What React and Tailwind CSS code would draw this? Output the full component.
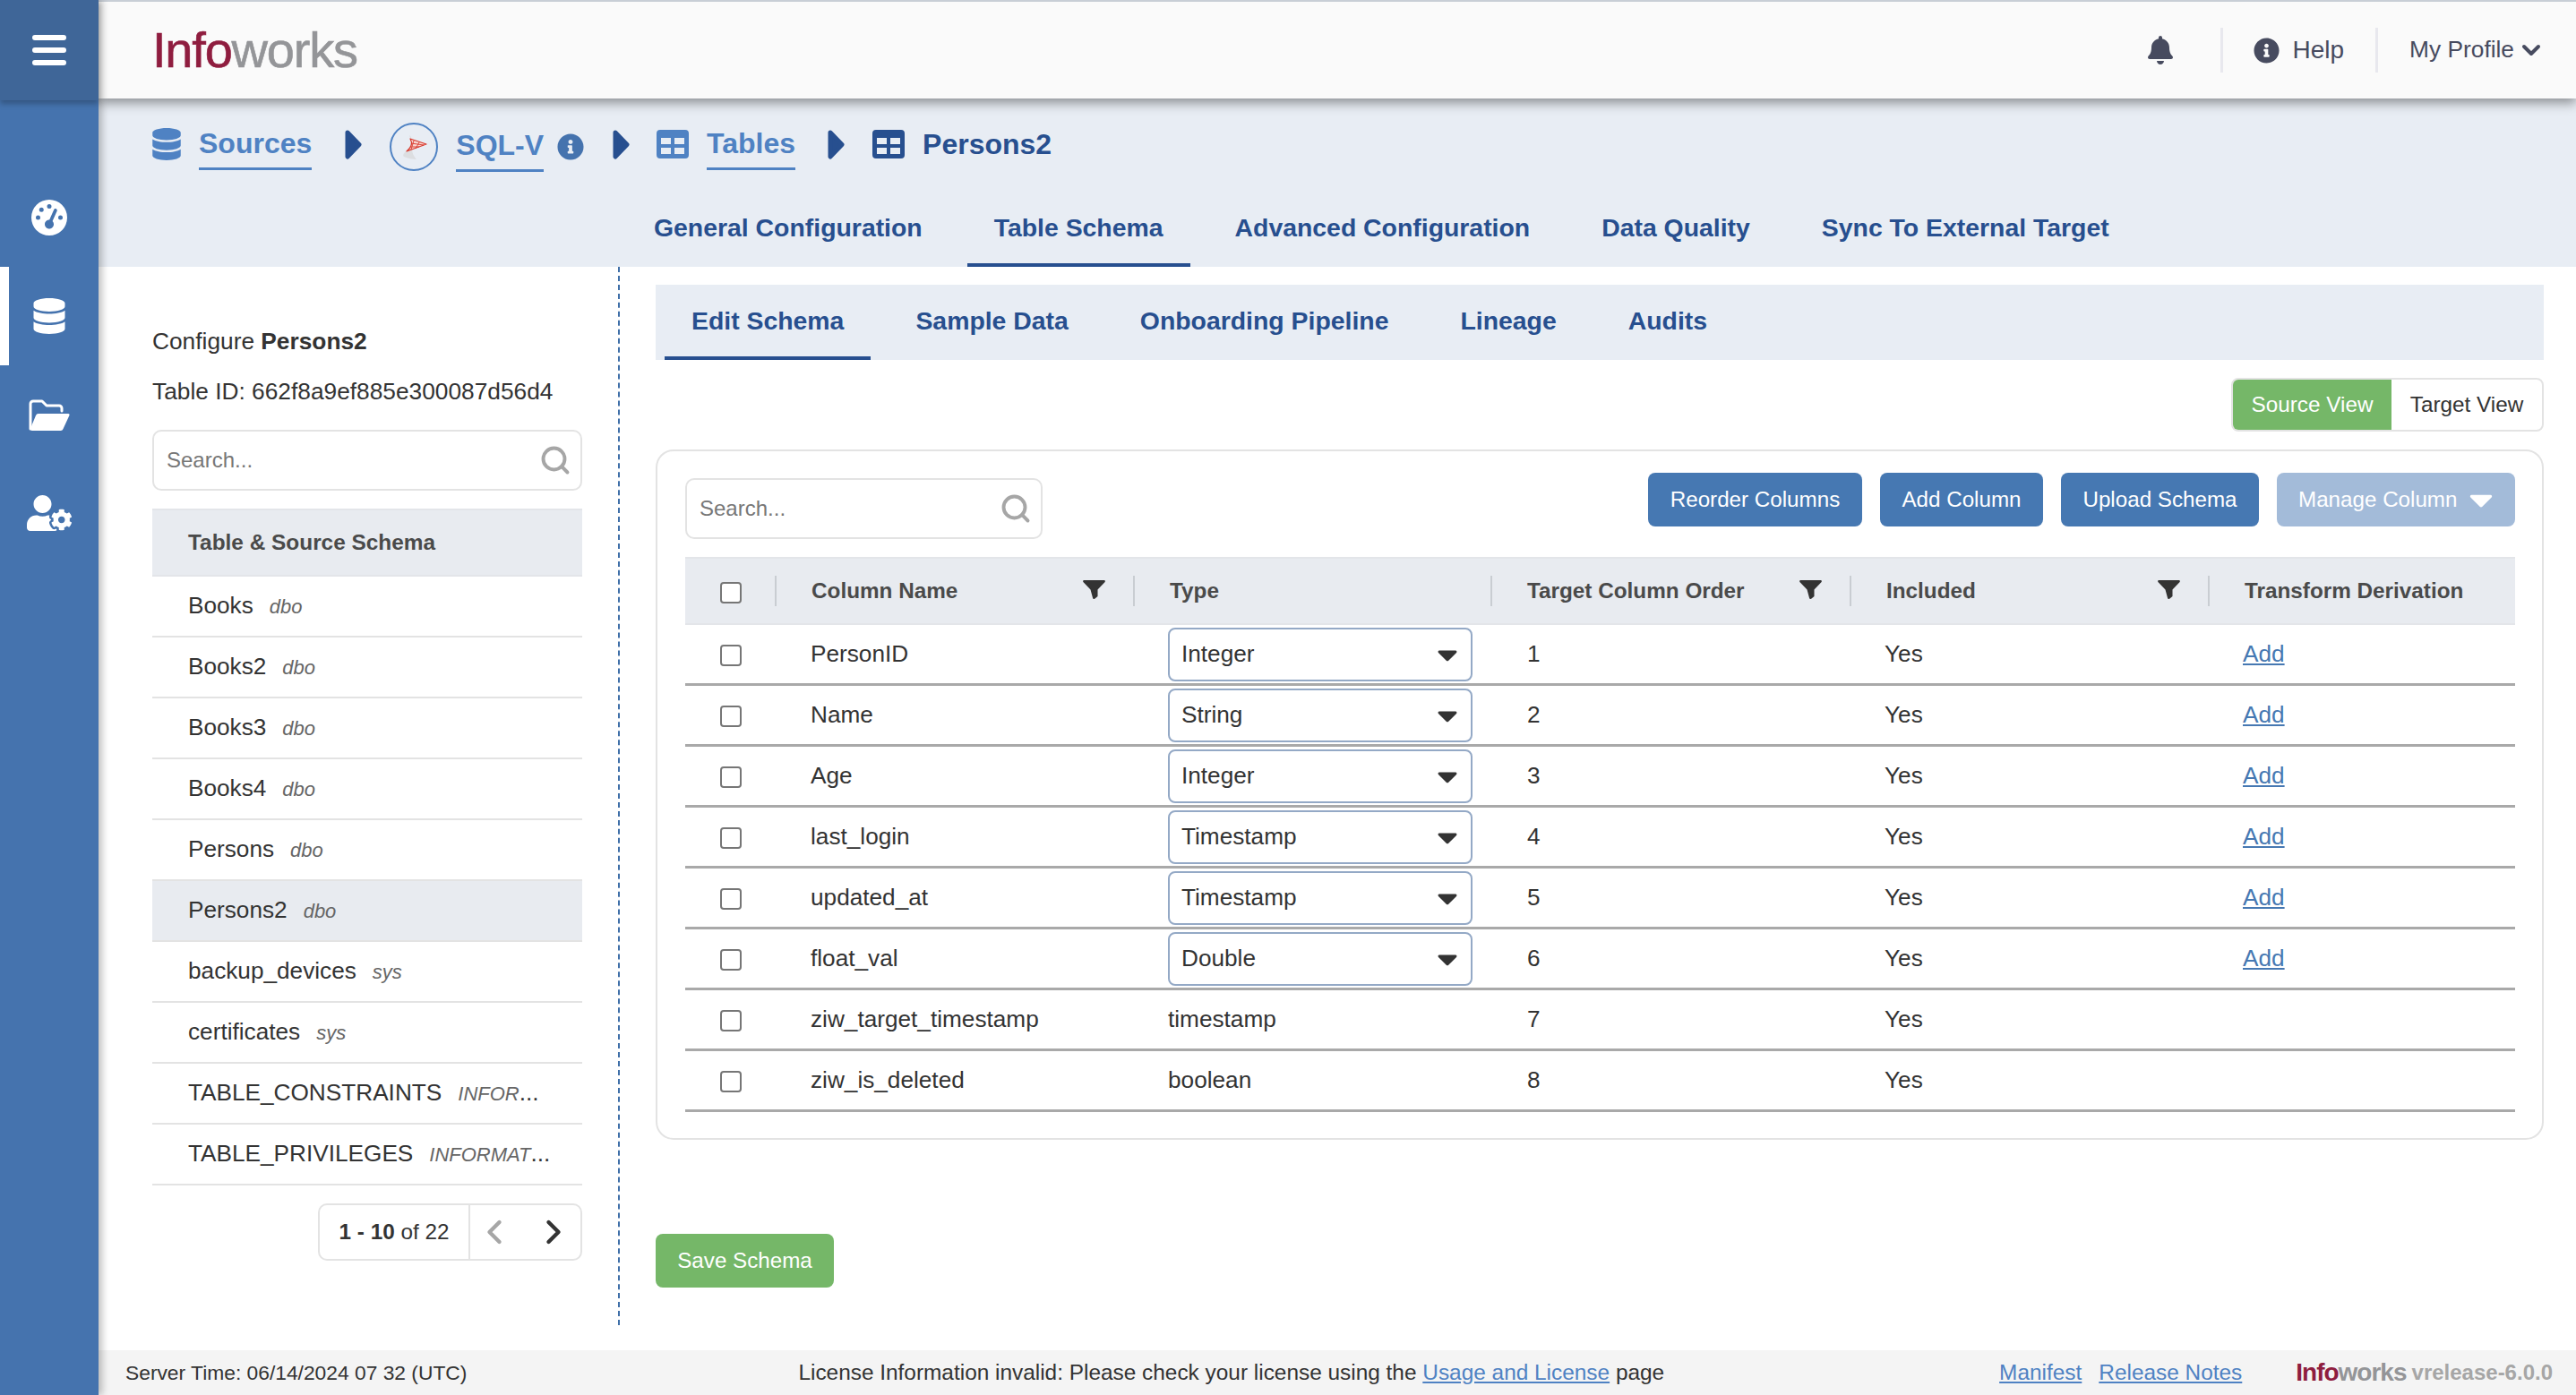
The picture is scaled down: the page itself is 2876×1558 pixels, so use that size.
import { ChevronDown, ChevronLeft, ChevronRight, Search } from 'lucide-react';
import { FaBell, FaCaretDown, FaDatabase, FaInfoCircle, FaUserCog } from 'react-icons/fa';
import { FaGaugeHigh } from 'react-icons/fa6';

const topTabs = ['General Configuration', 'Table Schema', 'Advanced Configuration', 'Data Quality', 'Sync To External Target'];
const subTabs = ['Edit Schema', 'Sample Data', 'Onboarding Pipeline', 'Lineage', 'Audits'];

const tables = [
  { name: 'Books', schema: 'dbo' },
  { name: 'Books2', schema: 'dbo' },
  { name: 'Books3', schema: 'dbo' },
  { name: 'Books4', schema: 'dbo' },
  { name: 'Persons', schema: 'dbo' },
  { name: 'Persons2', schema: 'dbo', active: true },
  { name: 'backup_devices', schema: 'sys' },
  { name: 'certificates', schema: 'sys' },
  { name: 'TABLE_CONSTRAINTS', schema: 'INFOR', cut: true },
  { name: 'TABLE_PRIVILEGES', schema: 'INFORMAT', cut: true },
];

const columns = [
  { name: 'PersonID', type: 'Integer', editable: true },
  { name: 'Name', type: 'String', editable: true },
  { name: 'Age', type: 'Integer', editable: true },
  { name: 'last_login', type: 'Timestamp', editable: true },
  { name: 'updated_at', type: 'Timestamp', editable: true },
  { name: 'float_val', type: 'Double', editable: true },
  { name: 'ziw_target_timestamp', type: 'timestamp' },
  { name: 'ziw_is_deleted', type: 'boolean' },
];

const gridCols = 'grid grid-cols-[100px_400px_399px_401px_400px_343px]';

const Arrow = () => (
  <svg viewBox="0 0 19 33" className="w-[19px] h-[33px] mb-[5px] text-[#274f8f]">
    <path d="M3 3 L16 16.5 L3 30 Z" fill="currentColor" stroke="currentColor" strokeWidth="5" strokeLinejoin="round" />
  </svg>
);

const TableIcon = ({ className }) => (
  <svg viewBox="0 0 36 32" className={className}>
    <path
      fill="currentColor"
      fillRule="evenodd"
      d="M4 0h28a4 4 0 0 1 4 4v24a4 4 0 0 1-4 4H4a4 4 0 0 1-4-4V4a4 4 0 0 1 4-4z M5 9v7h11V9z M20 9v7h11V9z M5 20v7h11v-7z M20 20v7h11v-7z"
    />
  </svg>
);

const FolderIcon = () => (
  <svg viewBox="0 0 46 35" className="w-[46px] h-[35px] text-white">
    <path d="M2 33 V5 a3 3 0 0 1 3-3 H15 l5 5 H34 a3 3 0 0 1 3 3 V13" fill="none" stroke="currentColor" strokeWidth="3" strokeLinejoin="round" strokeLinecap="round" />
    <path d="M11 16 H44 a1.5 1.5 0 0 1 1.4 2 L38.5 33 a3 3 0 0 1-2.7 2 H4 a2 2 0 0 1-2-2.6 L8 18 a3 3 0 0 1 3-2 Z" fill="currentColor" />
  </svg>
);

const FilterIcon = () => (
  <svg viewBox="0 0 25 21" className="w-[25px] h-[21px] text-[#333] mb-[3px]">
    <path
      fill="currentColor"
      d="M1.5 0 H23.5 C24.8 0 25.3 1.2 24.4 2.2 L16.5 10.5 V18 L13.5 20.6 C12.5 21.4 11 21 11 19.8 L8.5 10.5 L0.6 2.2 C-0.3 1.2 0.2 0 1.5 0 Z"
    />
  </svg>
);

const SqlLogo = () => (
  <div className="w-[54px] h-[54px] rounded-full border-2 border-[#4f82c3] flex items-center justify-center shrink-0">
    <svg viewBox="0 0 50 50" className="w-[50px] h-[50px]">
      <path d="M20 12 C24 14 23 22 18 28 C14 32 12 34 14 36 C18 38 24 39 28 39 C24 34 22 30 24 24 Z" fill="#dcdee1" />
      <path d="M21 16 L39 22 L17 30 C22 26 24 21 21 16 Z" fill="#f7d5d0" stroke="#d93a2e" strokeWidth="1.2" strokeLinejoin="round" />
      <path d="M25 18 L22 28 M31 20 L27 27 M22 21 L36 23 M21 25 L31 25" stroke="#d93a2e" strokeWidth="0.9" fill="none" />
    </svg>
  </div>
);

const SearchBox = ({ className }) => (
  <div className={`flex items-center justify-between h-[68px] border-2 border-[#e3e3e3] rounded-[10px] pl-[14px] pr-[10px] bg-white ${className}`}>
    <span className="text-[24px] text-[#777]">Search...</span>
    <Search className="w-[36px] h-[36px] text-[#a6a6a6]" strokeWidth={2.6} />
  </div>
);

const HeaderCell = ({ label, filter }) => (
  <div className="flex items-center justify-between self-center h-[34px] border-l-2 border-[#c9cdd2] pl-[39px] pr-[31px]">
    <span className="text-[24.3px] font-bold text-[#4a4a4a]">{label}</span>
    {filter && <FilterIcon />}
  </div>
);

const Checkbox = () => (
  <div className="pl-[39px] pt-[3px] flex items-center">
    <input type="checkbox" className="appearance-none w-[24px] h-[24px] border-2 border-[#767676] rounded-[4px] bg-white" />
  </div>
);

const App = () => {
  return (
    <div className="flex w-[2876px] h-[1558px] overflow-hidden bg-white font-['Liberation_Sans',sans-serif] text-[#333]">
      {/* Sidebar */}
      <aside className="relative z-20 flex flex-col w-[110px] shrink-0 bg-[#4573ae] shadow-[4px_0_8px_rgba(0,0,0,0.25)]">
        <div className="flex flex-col items-center justify-center gap-[8px] h-[112px] bg-[#3f6698] shadow-[0_4px_6px_rgba(0,0,0,0.25)]">
          <div className="w-[38px] h-[6px] rounded-full bg-white" />
          <div className="w-[38px] h-[6px] rounded-full bg-white" />
          <div className="w-[38px] h-[6px] rounded-full bg-white" />
        </div>
        <div className="flex items-center justify-center h-[110px] mt-[76px] text-white">
          <FaGaugeHigh className="w-[40px] h-[40px]" />
        </div>
        <div className="flex items-center justify-center h-[110px] border-l-[10px] border-white text-white pr-[10px]">
          <FaDatabase className="w-[36px] h-[40px]" />
        </div>
        <div className="flex items-center justify-center h-[110px]">
          <FolderIcon />
        </div>
        <div className="flex items-center justify-center h-[110px] text-white">
          <FaUserCog className="w-[50px] h-[40px]" />
        </div>
      </aside>

      <div className="flex flex-col flex-1 min-w-0">
        {/* Top bar */}
        <header className="relative z-10 flex items-center h-[110px] shrink-0 bg-[#fafafa] border-t-2 border-[#c8ced6] shadow-[0_5px_12px_rgba(0,0,0,0.4)] pl-[60px]">
          <div className="text-[56px] tracking-[-1.2px] leading-none [-webkit-text-stroke:0.6px]">
            <span className="text-[#8f1d3f]">Info</span>
            <span className="text-[#949598]">works</span>
          </div>
          <div className="flex items-center ml-auto text-[#474b5f]">
            <FaBell className="w-[28px] h-[32px]" />
            <div className="w-[3px] h-[50px] bg-[#e8e8ee] ml-[53px]" />
            <FaInfoCircle className="w-[29px] h-[29px] ml-[34px]" />
            <span className="text-[28px] ml-[15px]">Help</span>
            <div className="w-[3px] h-[50px] bg-[#e8e8ee] ml-[35px]" />
            <span className="text-[26.3px] ml-[35px]">My Profile</span>
            <ChevronDown className="w-[32px] h-[32px] ml-[3px] mr-[34px]" strokeWidth={3} />
          </div>
        </header>

        {/* Breadcrumb and top tabs */}
        <section className="h-[188px] shrink-0 bg-[#e8edf4]">
          <div className="flex items-center h-[54px] mt-[27px] pl-[60px] text-[32px] font-bold">
            <FaDatabase className="w-[32px] h-[36px] mb-[6px] text-[#4f82c3]" />
            <a className="ml-[20px] h-[52px] border-b-[3px] border-[#4f82c3] text-[#4f82c3] leading-[44px]">Sources</a>
            <div className="ml-[37px]"><Arrow /></div>
            <div className="ml-[31px]"><SqlLogo /></div>
            <a className="ml-[20px] h-[52px] mt-[4px] border-b-[3px] border-[#4f82c3] text-[#4f82c3] leading-[44px]">SQL-V</a>
            <FaInfoCircle className="w-[30px] h-[30px] ml-[15px] text-[#4573ae]" />
            <div className="ml-[32px]"><Arrow /></div>
            <TableIcon className="w-[36px] h-[32px] ml-[30px] mb-[7px] text-[#4f82c3]" />
            <a className="ml-[20px] h-[52px] border-b-[3px] border-[#4f82c3] text-[#4f82c3] leading-[44px]">Tables</a>
            <div className="ml-[36px]"><Arrow /></div>
            <TableIcon className="w-[36px] h-[32px] ml-[31px] mb-[7px] text-[#274f8f]" />
            <span className="ml-[20px] mb-[6px] text-[#274f8f]">Persons2</span>
          </div>
          <nav className="flex gap-[20px] mt-[35px] pl-[590px]">
            {topTabs.map((tab) => (
              <div
                key={tab}
                className={`h-[72px] px-[30px] pb-[12px] flex items-center text-[28.4px] font-bold text-[#274f8f] border-b-[4px] ${
                  tab === 'Table Schema' ? 'border-[#274f8f]' : 'border-transparent'
                }`}
              >
                {tab}
              </div>
            ))}
          </nav>
        </section>

        {/* Content */}
        <div className="flex flex-1 min-h-0">
          {/* Table list */}
          <div className="w-[582px] h-[1182px] shrink-0 border-r-2 border-dashed border-[#3f6fa8] pl-[60px] pr-[40px]">
            <p className="text-[26.3px] mt-[68px] leading-[30px]">
              Configure <b>Persons2</b>
            </p>
            <p className="text-[26.3px] mt-[26px] leading-[30px]">Table ID: 662f8a9ef885e300087d56d4</p>
            <SearchBox className="mt-[28px]" />
            <div className="flex items-center h-[76px] mt-[20px] pl-[40px] bg-[#e8ebf0] border-y-2 border-[#e3e5e9] text-[24.4px] font-bold text-[#4a4a4a]">
              Table &amp; Source Schema
            </div>
            {tables.map((t) => (
              <div
                key={t.name}
                className={`h-[68px] leading-[65px] pl-[40px] border-b-2 border-[#e3e3e3] text-[26.2px] whitespace-nowrap ${
                  t.active ? 'bg-[#e8ebf0]' : ''
                }`}
              >
                {t.name}
                <i className="ml-[18px] text-[22px] text-[#666]">{t.schema}</i>
                {t.cut && '...'}
              </div>
            ))}
            <div className="flex justify-end mt-[20px]">
              <div className="flex items-center w-[295px] h-[64px] border-2 border-[#e3e3e3] rounded-[10px]">
                <div className="flex items-center justify-center w-[168px] h-full border-r-2 border-[#e3e3e3] text-[24.3px]">
                  <b>1 - 10</b>&nbsp;of 22
                </div>
                <ChevronLeft className="w-[44px] h-[44px] ml-[5px] text-[#a6a6a6]" strokeWidth={2.4} />
                <ChevronRight className="w-[44px] h-[44px] ml-[22px] text-[#333]" strokeWidth={2.4} />
              </div>
            </div>
          </div>

          {/* Schema editor */}
          <div className="flex-1 min-w-0 pl-[40px] pr-[36px]">
            <nav className="flex h-[84px] mt-[20px] pl-[10px] gap-[20px] bg-[#e8edf4]">
              {subTabs.map((tab) => (
                <div
                  key={tab}
                  className={`flex items-center px-[30px] text-[28.4px] font-bold text-[#274f8f] border-b-[4px] ${
                    tab === 'Edit Schema' ? 'border-[#274f8f]' : 'border-transparent'
                  }`}
                >
                  {tab}
                </div>
              ))}
            </nav>

            <div className="flex justify-end mt-[20px]">
              <div className="flex h-[60px] border-2 border-[#e3e3e3] rounded-[8px] overflow-hidden text-[24.3px]">
                <div className="flex items-center justify-center w-[177px] bg-[#75b768] text-white">Source View</div>
                <div className="flex items-center justify-center w-[168px]">Target View</div>
              </div>
            </div>

            <div className="mt-[20px] border-2 border-[#e3e3e3] rounded-[20px] pt-[24px] pb-[29px] pl-[31px] pr-[30px]">
              <div className="flex items-start justify-between mb-[20px]">
                <SearchBox className="w-[399px] mt-[6px]" />
                <div className="flex gap-[20px] text-[24.2px] text-white">
                  <button className="w-[239px] h-[60px] rounded-[8px] bg-[#4678b2]">Reorder Columns</button>
                  <button className="w-[182px] h-[60px] rounded-[8px] bg-[#4678b2]">Add Column</button>
                  <button className="w-[221px] h-[60px] rounded-[8px] bg-[#4678b2]">Upload Schema</button>
                  <button className="flex items-center gap-[13px] w-[266px] h-[60px] pl-[24px] rounded-[8px] bg-[#a3bbd9]">
                    Manage Column
                    <FaCaretDown className="w-[28px] h-[42px]" />
                  </button>
                </div>
              </div>

              {/* Column table */}
              <div className={`${gridCols} h-[76px] bg-[#e8ebf0] border-y-2 border-[#e3e5e9]`}>
                <Checkbox />
                <HeaderCell label="Column Name" filter />
                <HeaderCell label="Type" />
                <HeaderCell label="Target Column Order" filter />
                <HeaderCell label="Included" filter />
                <HeaderCell label="Transform Derivation" />
              </div>
              {columns.map((col, i) => (
                <div key={col.name} className={`${gridCols} h-[68px] border-b-[3px] border-[#a9a9a9] text-[26.2px]`}>
                  <Checkbox />
                  <div className="flex items-center pl-[40px]">{col.name}</div>
                  <div className="flex items-center pl-[39px]">
                    {col.editable ? (
                      <div className="flex items-center justify-between w-[340px] h-[60px] pl-[13px] pr-[14px] bg-white border-2 border-[#94a9c6] rounded-[8px]">
                        {col.type}
                        <FaCaretDown className="w-[24px] h-[36px] text-[#333]" />
                      </div>
                    ) : (
                      col.type
                    )}
                  </div>
                  <div className="flex items-center pl-[41px]">{i + 1}</div>
                  <div className="flex items-center pl-[39px]">Yes</div>
                  <div className="flex items-center pl-[39px]">
                    {col.editable && <a className="text-[#4678b2] underline">Add</a>}
                  </div>
                </div>
              ))}
            </div>

            <button className="h-[60px] w-[199px] mt-[105px] rounded-[8px] bg-[#75b768] text-[24.2px] text-white">Save Schema</button>
          </div>
        </div>

        {/* Footer */}
        <footer className="flex items-center h-[50px] shrink-0 bg-[#f4f4f4] pl-[30px] pr-[26px] text-[24.4px]">
          <span className="text-[22.8px]">Server Time: 06/14/2024 07 32 (UTC)</span>
          <span className="ml-[370px]">
            License Information invalid: Please check your license using the{' '}
            <a className="text-[#4f82c3] underline">Usage and License</a> page
          </span>
          <div className="flex items-center ml-auto">
            <a className="text-[#4f82c3] underline">Manifest</a>
            <a className="ml-[19px] text-[#4f82c3] underline">Release Notes</a>
            <span className="ml-[60px] text-[28px] font-bold tracking-[-1px]">
              <span className="text-[#8f1d3f]">Info</span>
              <span className="text-[#949598]">works</span>
            </span>
            <span className="ml-[6px] text-[24px] font-bold text-[#a6a6a6]">vrelease-6.0.0</span>
          </div>
        </footer>
      </div>
    </div>
  );
};

export default App;
